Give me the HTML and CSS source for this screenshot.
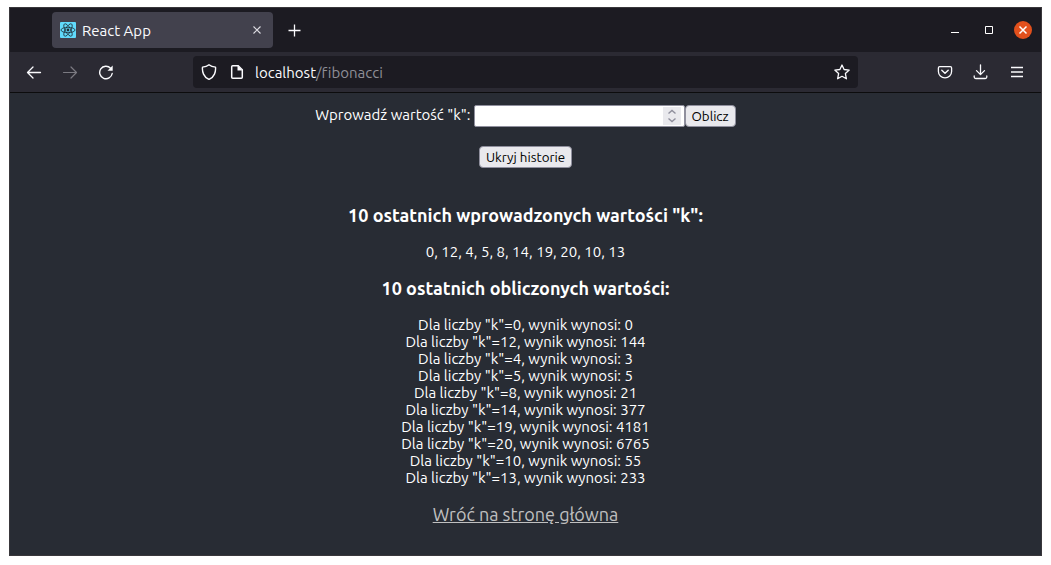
FILE: index.html
```html
<!DOCTYPE html>
<html lang="pl">
<head>
<meta charset="utf-8">
<meta name="viewport" content="width=device-width, initial-scale=1">
<title>React App</title>
<link rel="stylesheet" href="styles.css">
</head>
<body>
<div class="window">
  <header class="tabs">
    <div class="tab">
      <svg class="favicon" width="16" height="16" viewBox="0 0 16 16" aria-hidden="true">
        <rect width="16" height="16" rx="1" fill="#61dafb"/>
        <g fill="none" stroke="#20303a" stroke-width=".8">
          <ellipse cx="8" cy="8" rx="7" ry="2.7"/>
          <ellipse cx="8" cy="8" rx="7" ry="2.7" transform="rotate(60 8 8)"/>
          <ellipse cx="8" cy="8" rx="7" ry="2.7" transform="rotate(120 8 8)"/>
        </g>
        <circle cx="8" cy="8" r="1.4" fill="#20303a"/>
      </svg>
      <span class="tab-title">React App</span>
      <button class="icon-button" type="button" aria-label="Zamknij kartę">
        <svg width="16" height="16" viewBox="0 0 16 16"><path d="M4.500 4.500l7 7m0-7l-7 7" stroke="#dedde3" stroke-width="1.1"/></svg>
      </button>
    </div>
    <button class="icon-button new-tab" type="button" aria-label="Nowa karta">
      <svg width="16" height="16" viewBox="0 0 16 16"><path d="M7.500 2.500v12M1.500 8.500h12" stroke="#fbfbfe" stroke-width="1.3"/></svg>
    </button>
    <div class="window-controls">
      <button class="icon-button" type="button" aria-label="Minimalizuj">
        <svg width="16" height="16" viewBox="0 0 16 16"><path d="M3 10.500h8" stroke="#fff"/></svg>
      </button>
      <button class="icon-button" type="button" aria-label="Maksymalizuj">
        <svg width="16" height="16" viewBox="0 0 16 16"><path d="M4.500 4.500h7v7h-7z" fill="none" stroke="#fff"/></svg>
      </button>
      <button class="icon-button close" type="button" aria-label="Zamknij">
        <svg width="18" height="18" viewBox="0 0 18 18"><path d="M5.500 5.500l7 7m0-7l-7 7" stroke="#fff" stroke-width="1.5"/></svg>
      </button>
    </div>
  </header>

  <nav class="toolbar" aria-label="Nawigacja">
    <div class="history-buttons">
      <button class="icon-button" type="button" aria-label="Wstecz">
        <svg width="16" height="16" viewBox="0 0 16 16"><path d="M14.500 8.500H1.500M7 3L1.500 8.500 7 14" fill="none" stroke="#fbfbfe" stroke-width="1.3" stroke-linecap="round" stroke-linejoin="round"/></svg>
      </button>
      <button class="icon-button" type="button" aria-label="Dalej" disabled>
        <svg width="16" height="16" viewBox="0 0 16 16"><path d="M1.500 8.500h13M9 3l5.500 5.500L9 14" fill="none" stroke="#7b7a82" stroke-width="1.2" stroke-linecap="round" stroke-linejoin="round"/></svg>
      </button>
      <button class="icon-button" type="button" aria-label="Odśwież">
        <svg width="16" height="16" viewBox="0 0 16 16"><path d="M14.200 9.500A6.300 6.300 0 1 1 12.600 4.200" fill="none" stroke="#fbfbfe" stroke-width="1.4" stroke-linecap="round"/><path d="M14.700 1.500v5.200H9.500z" fill="#fbfbfe"/></svg>
      </button>
    </div>
    <div class="address">
      <svg width="16" height="16" viewBox="0 0 16 16" aria-hidden="true"><path d="M8 .8C6.500 2 4 2.900 1.500 3.100 1 7.500 2.600 13.400 8 15.400c5.400-2 7-7.900 6.500-12.300C12 2.900 9.500 2 8 .8z" fill="none" stroke="#fbfbfe" stroke-width="1.4" stroke-linejoin="round"/></svg>
      <svg width="16" height="16" viewBox="0 0 16 16" aria-hidden="true"><path d="M3.700 1.700h5.500l4.100 4.100v7.500q0 1-1 1H3.700q-1 0-1-1V2.700q0-1 1-1z" fill="none" stroke="#fbfbfe" stroke-width="1.500"/><path d="M8.500 1.500v5h5z" fill="#fbfbfe"/></svg>
      <span class="url"><span class="host">localhost</span>/fibonacci</span>
      <button class="icon-button" type="button" aria-label="Dodaj zakładkę">
        <svg width="16" height="16" viewBox="0 0 16 16"><path d="M8 1l2.100 4.500 5.100.6-3.800 3.500 1 5.200L8 12.300l-4.400 2.500 1-5.200L.8 6.100l5.100-.6z" fill="none" stroke="#fbfbfe" stroke-width="1.300" stroke-linejoin="round"/></svg>
      </button>
    </div>
    <div class="tools">
      <button class="icon-button" type="button" aria-label="Pocket">
        <svg width="16" height="16" viewBox="0 0 16 16"><path d="M2.700 2.700h10.600q1.300 0 1.300 1.300v3.400a6.600 6.400 0 0 1-13.200 0V4q0-1.300 1.300-1.300z" fill="none" stroke="#fbfbfe" stroke-width="1.300"/><path d="M4.800 6.200L8 9.300l3.200-3.100" fill="none" stroke="#fbfbfe" stroke-width="1.400" stroke-linecap="round" stroke-linejoin="round"/></svg>
      </button>
      <button class="icon-button" type="button" aria-label="Pobrane">
        <svg width="16" height="16" viewBox="0 0 16 16"><path d="M7.500 .8v9.500M3.500 6.600l4 4 4-4M1.200 12v1q0 1.500 1.500 1.500h9.600q1.500 0 1.500-1.500v-1" fill="none" stroke="#fbfbfe" stroke-width="1.300" stroke-linecap="round" stroke-linejoin="round"/></svg>
      </button>
      <button class="icon-button" type="button" aria-label="Menu">
        <svg width="16" height="16" viewBox="0 0 16 16"><path d="M2 3.500h12M2 8h12M2 12.500h12" stroke="#fbfbfe" stroke-width="1.300"/></svg>
      </button>
    </div>
  </nav>

  <main class="page">
    <form class="query">
      <label class="query-label" for="k">Wprowadź wartość "k":</label>
      <span class="number">
        <input class="number-input" id="k" type="number">
        <svg class="spinner" width="18" height="18" viewBox="0 0 18 18" aria-hidden="true"><rect width="18" height="18" fill="#e9e9ed"/><path d="M5.500 6.500L9 3.500l3.500 3M5.500 11.500l3.500 3 3.500-3" fill="none" stroke="#8f8f9d" stroke-width="1.400"/></svg>
      </span>
      <button class="button" type="button">Oblicz</button>
    </form>
    <button class="button" type="button">Ukryj historie</button>

    <section class="history">
      <h3 class="heading">10 ostatnich wprowadzonych wartości "k":</h3>
      <p class="values">0, 12, 4, 5, 8, 14, 19, 20, 10, 13</p>
      <h3 class="heading">10 ostatnich obliczonych wartości:</h3>
      <ul class="results">
        <li>Dla liczby "k"=0, wynik wynosi: 0</li>
        <li>Dla liczby "k"=12, wynik wynosi: 144</li>
        <li>Dla liczby "k"=4, wynik wynosi: 3</li>
        <li>Dla liczby "k"=5, wynik wynosi: 5</li>
        <li>Dla liczby "k"=8, wynik wynosi: 21</li>
        <li>Dla liczby "k"=14, wynik wynosi: 377</li>
        <li>Dla liczby "k"=19, wynik wynosi: 4181</li>
        <li>Dla liczby "k"=20, wynik wynosi: 6765</li>
        <li>Dla liczby "k"=10, wynik wynosi: 55</li>
        <li>Dla liczby "k"=13, wynik wynosi: 233</li>
      </ul>
    </section>
    <a class="home-link" href="#">Wróć na stronę główna</a>
  </main>
</div>
</body>
</html>
```
FILE: styles.css
```css
* {
  box-sizing: border-box;
}

body {
  display: flex;
  min-height: 100vh;
  margin: 0;
  padding: 8px 10px 10px;
  background: #fff;
  color: #fff;
  font: 15px/17px Ubuntu, "Noto Sans", sans-serif;
}

.window {
  display: flex;
  flex: 1;
  flex-direction: column;
  background: #282c34;
  box-shadow: 0 0 0 1px #39373b;
}

.tabs {
  display: flex;
  align-items: center;
  height: 44px;
  padding: 0 9px 0 42px;
  background: #1c1b22;
}

.tab {
  display: flex;
  align-items: center;
  gap: 6px;
  width: 221px;
  height: 36px;
  padding: 0 8px;
  border-radius: 4px;
  background: #42414d;
  color: #fbfbfe;
}

.tab-title {
  flex: 1;
}

.icon-button {
  display: flex;
  padding: 0;
  border: 0;
  background: none;
}

.new-tab {
  margin-left: 14px;
}

.window-controls {
  display: flex;
  align-items: center;
  gap: 17px;
  margin-left: auto;
}

.close {
  border-radius: 50%;
  background: #e2501c;
}

.toolbar {
  display: flex;
  align-items: center;
  height: 41px;
  padding: 0 16px;
  border-bottom: 1px solid #0c0c0d;
  background: #2b2a33;
}

.history-buttons,
.tools {
  display: flex;
  gap: 20px;
}

.address {
  display: flex;
  flex: 1;
  align-items: center;
  gap: 12px;
  height: 32px;
  margin: 0 79px;
  padding: 0 8px;
  border-radius: 4px;
  background: #1c1b22;
}

.url {
  flex: 1;
  margin-left: -2px;
  color: #8f8f98;
  font-variant-ligatures: none;
}

.host {
  color: #fbfbfe;
}

.page {
  display: flex;
  flex: 1;
  flex-direction: column;
  align-items: center;
  padding: 12px 16px 28px;
  text-align: center;
}

.query {
  display: flex;
  align-items: flex-start;
  margin: 0 0 19px;
}

.query-label {
  line-height: 20px;
}

.number {
  position: relative;
  display: flex;
  margin-left: 3px;
}

.number-input {
  width: 211px;
  height: 22px;
  padding: 0 24px 0 4px;
  border: 1px solid #8f8f9d;
  border-radius: 2px;
  background: #fff;
  font: inherit;
  appearance: textfield;
}

.spinner {
  position: absolute;
  top: 2px;
  right: 4px;
}

.button {
  height: 22px;
  padding: 0 6px;
  border: 1px solid #8f8f9d;
  border-radius: 4px;
  background: #e9e9ed;
  color: #000;
  font-family: Ubuntu, "Noto Sans", sans-serif;
}

.history {
  padding-top: 37px;
}

.heading {
  margin: 0 0 18px;
  font-size: 18px;
  line-height: 20px;
}

.values {
  margin: 0 0 18px;
}

.results {
  margin: 0;
  padding: 0;
  list-style: none;
}

.home-link {
  margin-top: 18px;
  color: #c0c0c0;
  font-size: 18px;
  line-height: 21px;
}
```
